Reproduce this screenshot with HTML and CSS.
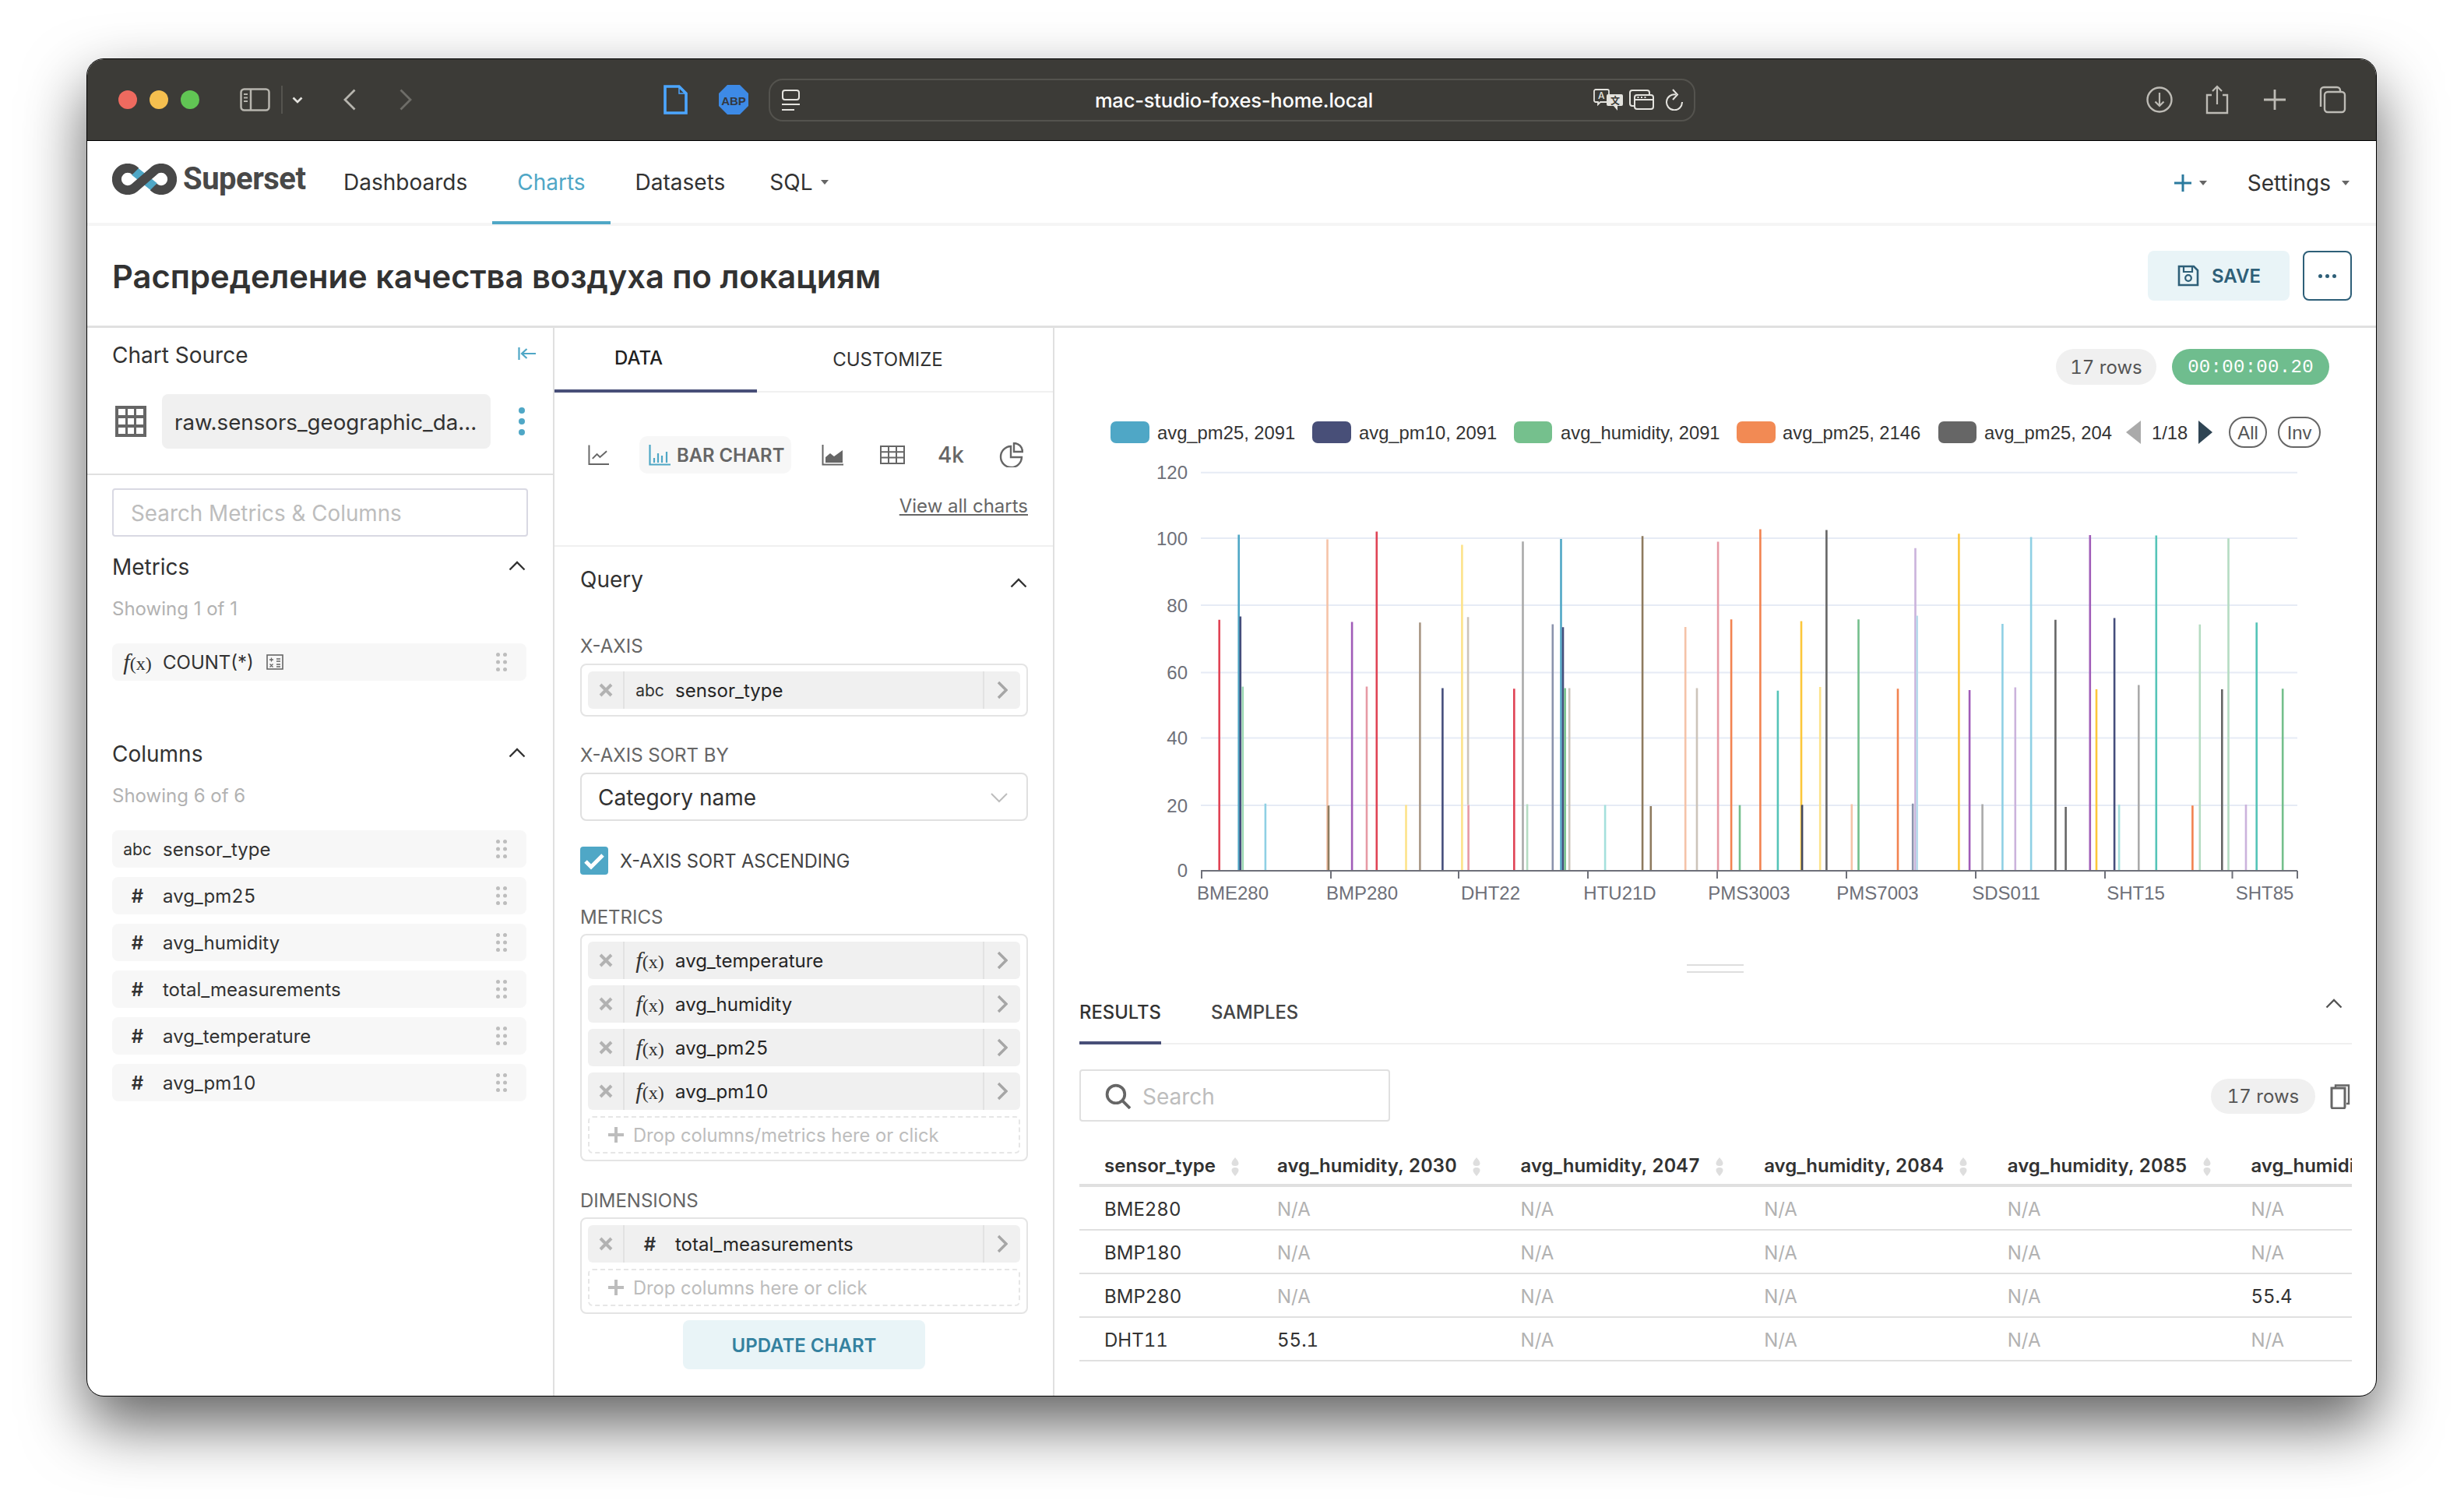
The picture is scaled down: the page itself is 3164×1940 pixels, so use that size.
FILE: index.html
```html
<!DOCTYPE html>
<html lang="en">
<head>
<meta charset="utf-8">
<title>Superset</title>
<link rel="stylesheet" href="styles.css">
</head>
<body>
<svg class="sprite" aria-hidden="true">
  <symbol id="drag" viewBox="0 0 14 24"><circle cx="2.5" cy="2.5" r="2.5"/><circle cx="11.5" cy="2.5" r="2.5"/><circle cx="2.5" cy="12" r="2.5"/><circle cx="11.5" cy="12" r="2.5"/><circle cx="2.5" cy="21.5" r="2.5"/><circle cx="11.5" cy="21.5" r="2.5"/></symbol>
  <symbol id="up" viewBox="0 0 22 13"><path d="M1.5 11.5 11 2l9.500 9.500" fill="none" stroke="currentColor" stroke-width="2.400"/></symbol>
  <symbol id="close" viewBox="0 0 18 18"><path d="M2 2l14 14M16 2 2 16" fill="none" stroke="currentColor" stroke-width="4"/></symbol>
  <symbol id="next" viewBox="0 0 14 24"><path d="M2 2l10 10L2 22" fill="none" stroke="currentColor" stroke-width="3.400"/></symbol>
  <symbol id="plus" viewBox="0 0 20 20"><path d="M10 0v20M0 10h20" fill="none" stroke="currentColor" stroke-width="4"/></symbol>
  <symbol id="plus-thin" viewBox="0 0 22 22"><path d="M11 0v22M0 11h22" fill="none" stroke="currentColor" stroke-width="3"/></symbol>
  <symbol id="sort" viewBox="0 0 10 24"><path d="M5 0C7 2.500 9.500 5 9.500 7.500a4.500 3.500 0 0 1-9 0C.5 5 3 2.500 5 0ZM5 24c2-2.500 4.500-5 4.500-7.500a4.500 3.500 0 0 0-9 0C.5 19 3 21.500 5 24Z"/></symbol>
</svg>

<div class="window">
  <header class="toolbar">
    <div class="lights"><span class="light light-red"></span><span class="light light-yellow"></span><span class="light light-green"></span></div>
    <svg class="tb-sidebar" viewBox="0 0 39 30"><rect x="1.500" y="1.500" width="36" height="27" rx="4" fill="none" stroke="currentColor" stroke-width="2.500"/><path d="M14 2v26" stroke="currentColor" stroke-width="2.500"/><path d="M5 8h5M5 12.500h5M5 17h5" stroke="currentColor" stroke-width="1.800"/></svg>
    <span class="tb-div"></span>
    <svg class="tb-chev" viewBox="0 0 14 9"><path d="M1.500 1.500 7 7l5.500-5.500" fill="none" stroke="currentColor" stroke-width="2.600"/></svg>
    <svg class="tb-back" viewBox="0 0 16 28"><path d="M14.500 1.500 2 14l12.500 12.500" fill="none" stroke="currentColor" stroke-width="2.800"/></svg>
    <svg class="tb-forward" viewBox="0 0 16 28"><path d="M1.500 1.500 14 14 1.500 26.500" fill="none" stroke="currentColor" stroke-width="2.800"/></svg>
    <svg class="tb-page" viewBox="0 0 31 38"><path d="M2 2h18l9 9v25H2Z" fill="none" stroke="#4ca6ff" stroke-width="3.600"/><path d="M20 2v9h9" fill="none" stroke="#4ca6ff" stroke-width="1.500"/></svg>
    <svg class="tb-abp" viewBox="0 0 38 38"><path class="abp-shape" d="M11 0h16l11 11v16L27 38H11L0 27V11Z"/><text class="abp-text" x="19" y="25.500" text-anchor="middle">ABP</text></svg>
    <div class="urlbar">
      <svg class="tb-reader" viewBox="0 0 23 27"><rect x="1" y="1" width="21" height="12" rx="3" fill="none" stroke="currentColor" stroke-width="2"/><path d="M0 19h23M0 26h16" stroke="currentColor" stroke-width="2"/></svg>
      <span class="url-text">mac-studio-foxes-home.local</span>
      <div class="url-actions">
        <svg class="tb-translate" viewBox="0 0 38 28"><path d="M3 1h15a2 2 0 0 1 2 2v12a2 2 0 0 1-2 2H9l-3 3v-3H3a2 2 0 0 1-2-2V3a2 2 0 0 1 2-2Z" fill="none" stroke="currentColor" stroke-width="1.800"/><text class="tr-a" x="6" y="13">A</text><path d="M19 7h17a2 2 0 0 1 2 2v11a2 2 0 0 1-2 2h-5v6l-5-6h-7a2 2 0 0 1-2-2V9a2 2 0 0 1 2-2Z" fill="currentColor"/><text class="tr-b" x="22" y="20">文</text></svg>
        <svg class="tb-windows" viewBox="0 0 32 26"><path d="M6 21H4a3 3 0 0 1-3-3V4a3 3 0 0 1 3-3h19a3 3 0 0 1 3 3v2" fill="none" stroke="currentColor" stroke-width="2"/><rect x="7" y="7" width="24" height="18" rx="3" fill="none" stroke="currentColor" stroke-width="2"/><path d="M7 13h24" stroke="currentColor" stroke-width="2"/><path d="M10.500 10h2M15 10h2M19.500 10h2" stroke="currentColor" stroke-width="2"/></svg>
        <svg class="tb-reload" viewBox="0 0 22 28"><path d="M13 7.500A10 10 0 1 0 21 17" fill="none" stroke="currentColor" stroke-width="2"/><path d="M9 1l6 6.500L9 14" fill="none" stroke="currentColor" stroke-width="2"/></svg>
      </div>
    </div>
    <div class="tb-right">
      <svg class="tb-tool" viewBox="0 0 36 38"><circle cx="18" cy="19" r="15.500" fill="none" stroke="currentColor" stroke-width="2.400"/><path d="M18 10v17M12.500 21.500 18 27l5.500-5.500" fill="none" stroke="currentColor" stroke-width="2.200"/></svg>
      <svg class="tb-tool" viewBox="0 0 36 38"><path d="M11 13H5v23h26V13h-6" fill="none" stroke="currentColor" stroke-width="2.400"/><path d="M18 25V2M12 8l6-6 6 6" fill="none" stroke="currentColor" stroke-width="2.200"/></svg>
      <svg class="tb-tool" viewBox="0 0 36 38"><path d="M18 6v26M4 19h28" fill="none" stroke="currentColor" stroke-width="2.800"/></svg>
      <svg class="tb-tool" viewBox="0 0 36 38"><path d="M3 28V7a4 4 0 0 1 4-4h17a4 4 0 0 1 4 4v2" fill="none" stroke="currentColor" stroke-width="2.400"/><rect x="8" y="9" width="26" height="26" rx="4" fill="none" stroke="currentColor" stroke-width="2.400"/></svg>
    </div>
  </header>

  <nav class="nav">
    <div class="brand">
      <svg class="brand-mark" viewBox="0 0 83 40"><path class="brand-blue" d="M29 10 54 30"/><path class="brand-dark" d="M30 10A14.140 14.140 0 1 0 30 30L53 10A14.140 14.140 0 1 1 53 30"/></svg>
      <span class="brand-name">Superset</span>
    </div>
    <a class="nav-item nav-first">Dashboards</a>
    <a class="nav-item nav-active">Charts</a>
    <a class="nav-item">Datasets</a>
    <a class="nav-item nav-sql">SQL<span class="caret"></span></a>
    <div class="nav-right">
      <span class="nav-plus"><svg class="nav-plus-icon"><use href="#plus-thin"/></svg><span class="caret"></span></span>
      <span class="nav-settings">Settings<span class="caret caret-settings"></span></span>
    </div>
  </nav>

  <section class="page-head">
    <h1 class="page-title">Распределение качества воздуха по локациям</h1>
    <div class="head-actions">
      <button class="btn-save">
        <svg class="save-icon" viewBox="0 0 28 28"><path d="M2 2h19l5 5v19H2Z" fill="none" stroke="currentColor" stroke-width="2.600"/><path d="M8 2v7h11V2" fill="none" stroke="currentColor" stroke-width="2.200"/><circle cx="14" cy="17" r="3.800" fill="none" stroke="currentColor" stroke-width="2.200"/></svg>
        SAVE
      </button>
      <button class="btn-more"><span class="dot"></span><span class="dot"></span><span class="dot"></span></button>
    </div>
  </section>

  <main class="main">
    <aside class="source">
      <div class="source-top">
        <div class="source-title-row">
          <span>Chart Source</span>
          <svg class="collapse-icon" viewBox="0 0 24 18"><path d="M1.500 1v16M23 9H5M11.500 3 5 9l6.500 6" fill="none" stroke="currentColor" stroke-width="2.200"/></svg>
        </div>
        <div class="dataset-row">
          <svg class="dataset-icon" viewBox="0 0 40 40"><path fill="#666" fill-rule="evenodd" d="M0 0h40v40H0ZM4 4v8h9V4Zm12 0v8h8V4Zm11 0v8h9V4ZM4 16v8h9v-8Zm12 0v8h8v-8Zm11 0v8h9v-8ZM4 28v8h9v-8Zm12 0v8h8v-8Zm11 0v8h9v-8Z"/></svg>
          <div class="dataset-name">raw.sensors_geographic_da...</div>
          <span class="kebab"><i></i><i></i><i></i></span>
        </div>
      </div>
      <div class="source-body">
        <div class="source-search">Search Metrics &amp; Columns</div>
        <div class="group-head metrics-head"><span>Metrics</span><svg class="chev-up"><use href="#up"/></svg></div>
        <div class="showing">Showing 1 of 1</div>
        <div class="list">
          <div class="list-row"><span class="type-cell"><span class="fx"><i>f</i>(x)</span></span><span class="row-name row-count">COUNT(*)</span>
            <svg class="calc-icon" viewBox="0 0 22 20"><rect x="1" y="1" width="20" height="18" fill="none" stroke="currentColor" stroke-width="1.600"/><path d="M4 7h5M6.500 4.500v5M13 6h5M13 9h5M4.500 12.500l4 4M8.500 12.500l-4 4M13 13h5M13 16h5" fill="none" stroke="currentColor" stroke-width="1.300"/></svg>
            <svg class="drag"><use href="#drag"/></svg></div>
        </div>
        <div class="group-head columns-head"><span>Columns</span><svg class="chev-up"><use href="#up"/></svg></div>
        <div class="showing">Showing 6 of 6</div>
        <div class="list">
          <div class="list-row"><span class="type-cell type-abc">abc</span><span class="row-name">sensor_type</span><svg class="drag"><use href="#drag"/></svg></div>
          <div class="list-row"><span class="type-cell type-hash">#</span><span class="row-name">avg_pm25</span><svg class="drag"><use href="#drag"/></svg></div>
          <div class="list-row"><span class="type-cell type-hash">#</span><span class="row-name">avg_humidity</span><svg class="drag"><use href="#drag"/></svg></div>
          <div class="list-row"><span class="type-cell type-hash">#</span><span class="row-name">total_measurements</span><svg class="drag"><use href="#drag"/></svg></div>
          <div class="list-row"><span class="type-cell type-hash">#</span><span class="row-name">avg_temperature</span><svg class="drag"><use href="#drag"/></svg></div>
          <div class="list-row"><span class="type-cell type-hash">#</span><span class="row-name">avg_pm10</span><svg class="drag"><use href="#drag"/></svg></div>
        </div>
      </div>
    </aside>

    <section class="controls">
      <div class="ctl-tabs">
        <div class="ctl-tab ctl-tab-data">DATA</div>
        <div class="ctl-tab ctl-tab-custom">CUSTOMIZE</div>
      </div>
      <div class="viz-row">
        <svg class="viz-line" viewBox="0 0 28 28"><path d="M1.500 1v25.500H28" fill="none" stroke="currentColor" stroke-width="2"/><path d="M6 19l6-6 4 4 9-8" fill="none" stroke="currentColor" stroke-width="2"/></svg>
        <div class="viz-active">
          <svg class="viz-bar" viewBox="0 0 28 28"><path d="M1.500 1v25.500H28M7 24v-6M12 24V12M17 24v-9M23 24V10" fill="none" stroke="currentColor" stroke-width="2.200"/></svg>
          BAR CHART
        </div>
        <svg class="viz-area" viewBox="0 0 36 28"><path d="M1.500 1v25.500H28" fill="none" stroke="currentColor" stroke-width="2"/><path d="M5 24v-7l6-5 5 4 11-8v16Z" fill="currentColor"/></svg>
        <svg class="viz-table" viewBox="0 0 32 24"><path d="M1 1h30v22H1ZM1 8.300h30M1 15.600h30M11 1v22M21 1v22" fill="none" stroke="currentColor" stroke-width="2"/></svg>
        <span class="viz-num">4k</span>
        <svg class="viz-pie" viewBox="0 0 37 32"><path d="M18 5A13.500 13.500 0 1 0 32 19H18Z" fill="none" stroke="currentColor" stroke-width="2.400" transform="translate(3 0)"/><path d="M25 1a11 11 0 0 1 11 11H25Z" fill="none" stroke="currentColor" stroke-width="2.400"/></svg>
      </div>
      <div class="view-all"><a>View all charts</a></div>
      <div class="query">
        <div class="query-head"><span>Query</span><svg class="chev-up"><use href="#up"/></svg></div>

        <div class="ctl-label label-xaxis">X-AXIS</div>
        <div class="ctl-box">
          <div class="pill"><span class="pill-x"><svg class="x-icon"><use href="#close"/></svg></span><span class="pill-type pill-abc">abc</span><span class="pill-name">sensor_type</span><span class="pill-go"><svg class="go-icon"><use href="#next"/></svg></span></div>
        </div>

        <div class="ctl-label label-sort">X-AXIS SORT BY</div>
        <div class="select"><span>Category name</span><svg class="select-chev" viewBox="0 0 22 13"><path d="M1 1l10 10L21 1" fill="none" stroke="currentColor" stroke-width="2"/></svg></div>

        <div class="check-row">
          <span class="check"><svg viewBox="0 0 36 36"><path d="M7 19l7 7L29 11" fill="none" stroke="#fff" stroke-width="5"/></svg></span>
          <span class="check-label">X-AXIS SORT ASCENDING</span>
        </div>

        <div class="ctl-label label-metrics">METRICS</div>
        <div class="ctl-box">
          <div class="pill"><span class="pill-x"><svg class="x-icon"><use href="#close"/></svg></span><span class="pill-type"><span class="fx"><i>f</i>(x)</span></span><span class="pill-name">avg_temperature</span><span class="pill-go"><svg class="go-icon"><use href="#next"/></svg></span></div>
          <div class="pill"><span class="pill-x"><svg class="x-icon"><use href="#close"/></svg></span><span class="pill-type"><span class="fx"><i>f</i>(x)</span></span><span class="pill-name">avg_humidity</span><span class="pill-go"><svg class="go-icon"><use href="#next"/></svg></span></div>
          <div class="pill"><span class="pill-x"><svg class="x-icon"><use href="#close"/></svg></span><span class="pill-type"><span class="fx"><i>f</i>(x)</span></span><span class="pill-name">avg_pm25</span><span class="pill-go"><svg class="go-icon"><use href="#next"/></svg></span></div>
          <div class="pill"><span class="pill-x"><svg class="x-icon"><use href="#close"/></svg></span><span class="pill-type"><span class="fx"><i>f</i>(x)</span></span><span class="pill-name">avg_pm10</span><span class="pill-go"><svg class="go-icon"><use href="#next"/></svg></span></div>
          <div class="drop"><svg class="drop-plus"><use href="#plus"/></svg>Drop columns/metrics here or click</div>
        </div>

        <div class="ctl-label label-dim">DIMENSIONS</div>
        <div class="ctl-box">
          <div class="pill"><span class="pill-x"><svg class="x-icon"><use href="#close"/></svg></span><span class="pill-type pill-hash">#</span><span class="pill-name">total_measurements</span><span class="pill-go"><svg class="go-icon"><use href="#next"/></svg></span></div>
          <div class="drop"><svg class="drop-plus"><use href="#plus"/></svg>Drop columns here or click</div>
        </div>

        <button class="btn-update">UPDATE CHART</button>
      </div>
    </section>

    <section class="viewer">
      <div class="viewer-badges">
        <span class="badge-rows">17 rows</span>
        <span class="badge-time">00:00:00.20</span>
      </div>
      <svg class="chart" viewBox="1354 510 1697 680">
        <defs><clipPath id="legend-clip"><rect x="2540" y="520" width="172" height="70"/></clipPath></defs>
        <g class="grid">
          <path d="M1542 606.700H2950M1542 691H2950M1542 777H2950M1542 863.400H2950M1542 947.600H2950M1542 1034H2950"/>
        </g>
        <g class="y-labels">
          <text x="1525" y="615">120</text><text x="1525" y="700">100</text><text x="1525" y="786">80</text><text x="1525" y="872">60</text><text x="1525" y="956">40</text><text x="1525" y="1043">20</text><text x="1525" y="1126">0</text>
        </g>
        <g class="bars">
          <path stroke="#e04355" d="M1565.700 795.800V1118M1767.800 682.600V1118M1944.300 884.200V1118"/>
          <path stroke="#4fa7c6" d="M1590.700 686.500V1118M2004.500 692.100V1118"/>
          <path stroke="#454e7c" d="M1592.800 791.400V1118M1852.400 883.400V1118M2007 805.300V1118M2715.100 793.600V1118"/>
          <path stroke="#74bf8c" d="M2009.600 883.400V1118M2234 1033.800V1118M2386.500 795.300V1118M2931.200 884.200V1118"/>
          <path stroke="#9ad6b0" d="M1595.800 881.600V1118"/>
          <path stroke="#8fd0e4" d="M1624.900 1031.700V1118M2571.400 801V1118M2608.100 689.500V1118"/>
          <path stroke="#f5c3a8" d="M1704.500 692.600V1118M2164.200 804.900V1118M2377.800 1032.500V1118"/>
          <path stroke="#8e7b5f" d="M1706 1034.300V1118M2109.100 688.200V1118M2119.800 1035.100V1118"/>
          <path stroke="#a89683" d="M1823.400 799.300V1118"/>
          <path stroke="#a05cb8" d="M1736.100 798.400V1118M2529.100 886V1118M2683.800 686.900V1118"/>
          <path stroke="#e69aa5" d="M1755 881.600V1118M1885.600 1033.400V1118M2206.100 695.600V1118"/>
          <path stroke="#fde38a" d="M1805.500 1033.400V1118M1877.400 699.500V1118M2337.200 882.100V1118"/>
          <path stroke="#ccc4ba" d="M1885.100 792.300V1033M2015.200 883.400V1118M2179 883.400V1118"/>
          <path stroke="#aaaaaa" d="M1955.500 695.200V1118M2545.600 1032.500V1118M2746.300 879.400V1118"/>
          <path stroke="#b5dcc2" d="M1961.100 1032.500V1118M2824.800 801.800V1118M2861.500 691.300V1118"/>
          <path stroke="#8b93ad" d="M1993.800 801.400V1118M2456.200 1031.700V1118"/>
          <path stroke="#a5e0dd" d="M2061.100 1033.400V1118M2721.100 1033V1118"/>
          <path stroke="#f28350" d="M2223.100 795.300V1118M2260.400 679.600V1118M2437 884.200V1118M2815.400 1034.300V1118"/>
          <path stroke="#55c4b8" d="M2282.900 886.800V1118M2768.800 687.400V1118M2897.700 799.200V1118"/>
          <path stroke="#fcc73a" d="M2313 797.500V1118M2515.400 685.200V1118M2692 885.100V1118"/>
          <path stroke="#444a60" d="M2314.100 1033.400V1118"/>
          <path stroke="#cbb3dc" d="M2459.500 703.800V1118M2587.800 882.500V1118M2884 1033V1118"/>
          <path stroke="#b8dcec" d="M2461.700 790.600V1118"/>
          <path stroke="#666666" d="M2345.400 680.400V1118M2639.400 795.800V1118M2652.600 1036V1118M2853.300 885.100V1118"/>
        </g>
        <path class="axis" d="M1542 1118H2950M1543 1118v10M1709 1118v10M1873 1118v10M2039 1118v10M2205 1118v10M2371 1118v10M2537 1118v10M2703 1118v10M2866.500 1118v10M2950 1118v10"/>
        <g class="x-labels">
          <text x="1583" y="1155">BME280</text><text x="1749" y="1155">BMP280</text><text x="1914" y="1155">DHT22</text><text x="2080" y="1155">HTU21D</text><text x="2246" y="1155">PMS3003</text><text x="2411" y="1155">PMS7003</text><text x="2576" y="1155">SDS011</text><text x="2742.500" y="1155">SHT15</text><text x="2908" y="1155">SHT85</text>
        </g>
        <g class="legend">
          <rect x="1426" y="541" width="50" height="28" rx="7" fill="#4fa7c6"/><text x="1486" y="563.500">avg_pm25, 2091</text>
          <rect x="1685" y="541" width="50" height="28" rx="7" fill="#484f78"/><text x="1745" y="563.500">avg_pm10, 2091</text>
          <rect x="1944" y="541" width="49" height="28" rx="7" fill="#75c08d"/><text x="2004" y="563.500">avg_humidity, 2091</text>
          <rect x="2230" y="541" width="50" height="28" rx="7" fill="#f28a54"/><text x="2289" y="563.500">avg_pm25, 2146</text>
          <rect x="2489" y="541" width="49" height="28" rx="7" fill="#666666"/><text x="2548" y="563.500" clip-path="url(#legend-clip)">avg_pm25, 2047</text>
          <path d="M2749 540v30l-19-15Z" fill="#aaaaaa"/>
          <text x="2763" y="563.500">1/18</text>
          <path d="M2823 540v30l18-15Z" fill="#2f4554"/>
          <rect class="legend-btn" x="2863" y="536" width="47" height="38" rx="19"/><text class="legend-btn-text" x="2886.500" y="563.500">All</text>
          <rect class="legend-btn" x="2926" y="536" width="53" height="38" rx="19"/><text class="legend-btn-text" x="2952.500" y="563.500">Inv</text>
        </g>
      </svg>
      <div class="handle"></div>
      <div class="results">
        <div class="res-tabs">
          <span class="res-tab res-tab-on">RESULTS</span>
          <span class="res-tab">SAMPLES</span>
          <svg class="res-collapse"><use href="#up"/></svg>
        </div>
        <div class="res-tools">
          <div class="res-search">
            <svg class="res-search-icon" viewBox="0 0 32 32"><circle cx="13.500" cy="13.500" r="11" fill="none" stroke="currentColor" stroke-width="3.600"/><path d="M21.500 21.500 31 31" stroke="currentColor" stroke-width="3.600"/></svg>
            <span>Search</span>
          </div>
          <div class="res-right">
            <span class="badge-rows res-count">17 rows</span>
            <svg class="copy-icon" viewBox="0 0 26 32"><path d="M7 4V1.500h17V25h-3" fill="none" stroke="currentColor" stroke-width="2.400"/><path d="M2 5h17v24a2 2 0 0 1-2 2H4a2 2 0 0 1-2-2Z" fill="none" stroke="currentColor" stroke-width="3"/></svg>
          </div>
        </div>
        <div class="table-wrap">
          <table class="res-table">
            <thead>
              <tr>
                <th class="col-first">sensor_type<svg class="sort"><use href="#sort"/></svg></th>
                <th>avg_humidity, 2030<svg class="sort"><use href="#sort"/></svg></th>
                <th>avg_humidity, 2047<svg class="sort"><use href="#sort"/></svg></th>
                <th>avg_humidity, 2084<svg class="sort"><use href="#sort"/></svg></th>
                <th>avg_humidity, 2085<svg class="sort"><use href="#sort"/></svg></th>
                <th>avg_humidity, 2091<svg class="sort"><use href="#sort"/></svg></th>
              </tr>
            </thead>
            <tbody>
              <tr><td>BME280</td><td class="na">N/A</td><td class="na">N/A</td><td class="na">N/A</td><td class="na">N/A</td><td class="na">N/A</td></tr>
              <tr><td>BMP180</td><td class="na">N/A</td><td class="na">N/A</td><td class="na">N/A</td><td class="na">N/A</td><td class="na">N/A</td></tr>
              <tr><td>BMP280</td><td class="na">N/A</td><td class="na">N/A</td><td class="na">N/A</td><td class="na">N/A</td><td>55.4</td></tr>
              <tr><td>DHT11</td><td>55.1</td><td class="na">N/A</td><td class="na">N/A</td><td class="na">N/A</td><td class="na">N/A</td></tr>
            </tbody>
          </table>
        </div>
      </div>
    </section>
  </main>
</div>
</body>
</html>
```

FILE: styles.css
```css
* { box-sizing: border-box; }
html, body { margin: 0; padding: 0; }
body {
  width: 3164px;
  height: 1940px;
  overflow: hidden;
  background: #fff;
  padding: 75px 0 0 111px;
  font-family: Inter, "Noto Sans", sans-serif;
  font-size: 28px;
  color: #323232;
}
svg { display: block; flex: none; }
.sprite { width: 0; height: 0; position: absolute; }

.window {
  width: 2941px;
  height: 1718px;
  border: 1px solid #000;
  border-radius: 22px;
  background: #fff;
  overflow: hidden;
  display: flex;
  flex-direction: column;
  box-shadow: 0 36px 80px rgba(0, 0, 0, .62);
}

/* browser toolbar */
.toolbar {
  height: 105px;
  flex: none;
  display: flex;
  align-items: center;
  padding-left: 40px;
  background: #3c3b37;
  border-bottom: 1px solid #000;
}
.lights { display: flex; gap: 16px; }
.light { width: 24px; height: 24px; border-radius: 50%; }
.light-red { background: #ee6a5f; }
.light-yellow { background: #f5bf4f; }
.light-green { background: #61c554; }
.tb-sidebar { width: 39px; height: 30px; margin-left: 52px; color: #b7b5ae; }
.tb-div { width: 2px; height: 36px; margin-left: 14px; background: #55544f; }
.tb-chev { width: 14px; height: 9px; margin-left: 12px; color: #e4e3de; }
.tb-back { width: 16px; height: 28px; margin-left: 52px; color: #b7b5ae; }
.tb-forward { width: 16px; height: 28px; margin-left: 56px; color: #6e6d68; }
.tb-page { width: 31px; height: 38px; margin-left: 323px; }
.tb-abp { width: 38px; height: 38px; margin-left: 40px; }
.abp-shape { fill: #3d8ae6; }
.abp-text { font: 700 15px "Liberation Sans", sans-serif; fill: #33383f; }
.urlbar {
  width: 1190px;
  height: 55px;
  margin-left: 26px;
  padding: 0 14px 0 15px;
  display: grid;
  grid-template-columns: 1fr auto 1fr;
  align-items: center;
  border: 2px solid #54534e;
  border-radius: 18px;
  color: #e4e3de;
}
.tb-reader { width: 23px; height: 27px; }
.url-text { font-size: 25.500px; font-weight: 500; color: #fff; letter-spacing: -.2px; margin-left: 4px; }
.url-actions { display: flex; align-items: center; justify-content: flex-end; gap: 8px; }
.tb-translate { width: 38px; height: 28px; }
.tr-a { font: 500 12px Inter, sans-serif; fill: currentColor; }
.tr-b { font: 700 12px "Noto Sans CJK SC", sans-serif; fill: #3c3b37; }
.tb-windows { width: 32px; height: 26px; }
.tb-reload { width: 22px; height: 28px; margin-left: 7px; }
.tb-right { margin-left: auto; padding-right: 38px; display: flex; gap: 38px; color: #bdbbb5; }
.tb-tool { width: 36px; height: 38px; }

/* app nav */
.nav {
  height: 109px;
  flex: none;
  display: flex;
  align-items: flex-start;
  padding-left: 32px;
  border-bottom: 4px solid #f5f5f5;
}
.brand { height: 105px; width: 265px; display: flex; align-items: center; padding-bottom: 8px; }
.brand-mark { width: 83px; height: 40px; }
.brand-blue { fill: none; stroke: #4fa7c6; stroke-width: 12px; }
.brand-dark { fill: none; stroke: #484848; stroke-width: 12px; }
.brand-name {
  margin-left: 8px;
  font: 700 40px Roboto, sans-serif;
  letter-spacing: -.5px;
  color: #484848;
}
.nav-item {
  height: 107px;
  padding: 3px 32px 0;
  display: flex;
  align-items: center;
  border-bottom: 4px solid transparent;
  position: relative;
}
.nav-active { color: #4fa7c6; border-bottom-color: #4fa7c6; }
.nav-sql { padding-left: 25px; }
.caret {
  display: inline-block;
  width: 0;
  height: 0;
  margin-left: 10px;
  border-left: 5px solid transparent;
  border-right: 5px solid transparent;
  border-top: 6px solid #666;
}
.caret-settings { margin-left: 14px; }
.nav-right { margin-left: auto; height: 105px; display: flex; align-items: center; padding-right: 34px; padding-top: 3px; }
.nav-plus { display: flex; align-items: center; color: #2b7a9e; }
.nav-plus-icon { width: 22px; height: 22px; }
.nav-settings { margin-left: 52px; display: flex; align-items: center; }

/* page header */
.page-head {
  height: 131px;
  flex: none;
  display: flex;
  align-items: center;
  justify-content: space-between;
  padding: 0 31px 0 32px;
  border-bottom: 3px solid #e0e0e0;
}
.page-title { margin: 2px 0 0; font-size: 41.700px; font-weight: 600; color: #323232; }
.head-actions { display: flex; gap: 17px; }
.btn-save {
  width: 182px;
  height: 64px;
  padding: 0 0 0 38px;
  display: flex;
  align-items: center;
  gap: 16px;
  border: 0;
  border-radius: 8px;
  background: #e9f4f7;
  color: #2e5f78;
  font: 600 24px Inter, sans-serif;
}
.save-icon { width: 28px; height: 28px; }
.btn-more {
  width: 63px;
  height: 64px;
  padding: 0;
  display: flex;
  align-items: center;
  justify-content: center;
  gap: 4px;
  border: 2px solid #2e5f78;
  border-radius: 8px;
  background: #fff;
}
.dot { width: 5px; height: 5px; border-radius: 50%; background: #2e5f78; }

/* three panes */
.main { flex: 1; min-height: 0; display: flex; }

/* source */
.source { width: 600px; flex: none; border-right: 2px solid #e0e0e0; }
.source-top { height: 189px; border-bottom: 2px solid #e0e0e0; padding: 0 21px 0 32px; }
.source-title-row { height: 70px; display: flex; align-items: center; justify-content: space-between; }
.collapse-icon { width: 24px; height: 18px; color: #4fa7c6; margin-bottom: 4px; }
.dataset-row { margin-top: 15px; height: 70px; display: flex; align-items: center; }
.dataset-icon { width: 40px; height: 40px; margin-left: 4px; }
.dataset-name {
  width: 422px;
  height: 70px;
  margin-left: 20px;
  padding: 2px 0 0 16px;
  display: flex;
  align-items: center;
  border-radius: 8px;
  background: #f0f0f0;
  font-size: 27.700px;
}
.kebab { margin-left: 36px; display: flex; flex-direction: column; gap: 6px; }
.kebab i { width: 8px; height: 8px; border-radius: 50%; background: #4fa7c6; }
.source-body { padding: 17px 32px 0 32px; }
.source-search {
  height: 62px;
  padding: 2px 0 0 22px;
  display: flex;
  align-items: center;
  border: 2px solid #d9d9e3;
  border-radius: 4px;
  color: #bdbdbd;
  font-size: 27.800px;
}
.group-head { height: 40px; display: flex; align-items: center; justify-content: space-between; padding: 0 3px 0 0; }
.metrics-head { margin-top: 19px; }
.columns-head { margin-top: 74px; }
.group-head .chev-up { margin-bottom: 3px; }
.chev-up { width: 22px; height: 13px; color: #323232; }
.showing { height: 40px; margin-top: 13px; display: flex; align-items: center; font-size: 24px; color: #b2b2b2; }
.list { margin: 25px 2px 0 0; display: flex; flex-direction: column; gap: 12px; }
.list-row {
  height: 48px;
  display: flex;
  align-items: center;
  border-radius: 8px;
  background: #f7f7f7;
  font-size: 24px;
}
.type-cell { width: 65px; flex: none; text-align: center; }
.type-abc { font-size: 21px; }
.type-hash { font-weight: 600; }
.row-name { margin-right: 16px; font-variant-numeric: tabular-nums; }
.row-count { font-variant-numeric: normal; }
.fx { font-family: "Liberation Serif", serif; font-size: 24px; white-space: nowrap; }
.fx i { font-size: 30px; line-height: 1; }
.calc-icon { width: 22px; height: 20px; color: #666; }
.drag { width: 14px; height: 24px; margin-left: auto; margin-right: 25px; fill: #bdbdbd; }

/* controls */
.controls { width: 642px; flex: none; border-right: 2px solid #e0e0e0; }
.ctl-tabs { height: 83px; display: flex; border-bottom: 2px solid #f0f0f0; }
.ctl-tab { height: 83px; display: flex; align-items: center; justify-content: center; padding-bottom: 2px; font-size: 24px; font-weight: 500; }
.ctl-tab-data { width: 260px; padding-right: 44px; border-bottom: 4px solid #484f78; color: #1f1f1f; }
.ctl-tab-custom { width: 336px; font-weight: 400; }
.viz-row { margin: 56px 0 0 43px; height: 48px; display: flex; align-items: center; gap: 39px; color: #666; }
.viz-line { width: 27px; height: 28px; }
.viz-active {
  width: 195px;
  height: 48px;
  padding-left: 12px;
  display: flex;
  align-items: center;
  gap: 8px;
  border-radius: 10px;
  background: #f7f7f7;
  font-size: 23.800px;
  font-weight: 600;
  white-space: nowrap;
}
.viz-bar { width: 28px; height: 28px; color: #4fa7c6; }
.viz-area { width: 36px; height: 28px; }
.viz-table { width: 32px; height: 24px; }
.viz-num { width: 37px; text-align: right; font-weight: 500; font-size: 28px; }
.viz-pie { width: 37px; height: 32px; }
.view-all { height: 40px; margin-top: 21px; padding-right: 32px; display: flex; align-items: center; justify-content: flex-end; font-size: 24px; color: #666; }
.view-all a { text-decoration: underline; }
.query { margin-top: 31px; padding: 22px 32px 0 33px; border-top: 2px solid #f0f0f0; }
.query-head { height: 40px; display: flex; align-items: center; justify-content: space-between; padding-right: 1px; }
.query-head .chev-up { margin-top: 8px; }
.ctl-label { height: 30px; margin-bottom: 8px; display: flex; align-items: center; font-size: 24px; color: #666; }
.label-xaxis { margin-top: 50px; }
.label-sort { margin-top: 34px; }
.label-metrics { margin-top: 39px; margin-bottom: 7px; }
.label-dim { margin-top: 35px; margin-bottom: 7px; }
.ctl-box {
  padding: 8px;
  display: flex;
  flex-direction: column;
  gap: 8px;
  border: 2px solid #e4e4e4;
  border-radius: 8px;
}
.pill { height: 48px; display: flex; align-items: center; border-radius: 6px; background: #f0f0f0; font-size: 24px; }
.pill-x { width: 47px; height: 48px; display: flex; align-items: center; justify-content: center; border-right: 2px solid #e2e2e2; color: #b2b2b2; }
.x-icon { width: 18px; height: 18px; }
.pill-type { width: 65px; text-align: center; }
.pill-abc { font-size: 21px; }
.pill-hash { font-weight: 600; }
.pill-name { flex: 1; color: #252525; font-variant-numeric: tabular-nums; }
.pill-go { width: 48px; height: 48px; display: flex; align-items: center; justify-content: center; border-left: 2px solid #e2e2e2; color: #a6a6a6; }
.go-icon { width: 14px; height: 24px; }
.select {
  height: 62px;
  padding: 2px 24px 0 21px;
  display: flex;
  align-items: center;
  justify-content: space-between;
  border: 2px solid #e0e0e0;
  border-radius: 8px;
}
.select-chev { width: 22px; height: 13px; color: #bdbdbd; }
.check-row { margin-top: 33px; height: 36px; display: flex; align-items: center; gap: 15px; }
.check { width: 36px; height: 36px; border-radius: 4px; background: #4fa7c6; }
.check-label { font-size: 23.600px; color: #444; }
.drop {
  height: 48px;
  padding-left: 24px;
  display: flex;
  align-items: center;
  gap: 12px;
  border: 2px dashed #e6e6e6;
  border-radius: 6px;
  font-size: 23.700px;
  color: #bdbdbd;
}
.drop-plus { width: 20px; height: 20px; color: #bdbdbd; }
.btn-update {
  display: block;
  width: 311px;
  height: 63px;
  margin: 8px auto 0;
  padding: 1px 0 0;
  border: 0;
  border-radius: 8px;
  background: #e9f4f7;
  color: #34819f;
  font: 600 24px Inter, sans-serif;
}

/* viewer */
.viewer { flex: 1; min-width: 0; padding-top: 27px; display: flex; flex-direction: column; }
.viewer-badges { height: 46px; padding-right: 60px; display: flex; justify-content: flex-end; gap: 20px; }
.badge-rows {
  width: 129px;
  height: 46px;
  display: flex;
  align-items: center;
  justify-content: center;
  border-radius: 23px;
  background: #f0f0f0;
  font-size: 24px;
  font-variant-numeric: tabular-nums;
  color: #555;
}
.badge-time {
  width: 202px;
  height: 46px;
  display: flex;
  align-items: center;
  justify-content: center;
  border-radius: 23px;
  background: #6fbd8e;
  color: #fff;
  font: 24px "Liberation Mono", monospace;
  letter-spacing: .3px;
}
.chart { width: 1697px; height: 680px; margin-top: 16px; }
.grid path { stroke: #e6ebf5; stroke-width: 2; fill: none; }
.y-labels text { text-anchor: end; font: 24px "Liberation Sans", sans-serif; fill: #6e7079; }
.x-labels text { text-anchor: middle; font: 24px "Liberation Sans", sans-serif; fill: #6e7079; }
.bars path { fill: none; stroke-width: 2.600; }
.axis { fill: none; stroke: #6e7079; stroke-width: 2; }
.legend text { font: 23.800px "Liberation Sans", sans-serif; fill: #333; }
.legend-btn { fill: #fff; stroke: #666; stroke-width: 2; }
.legend .legend-btn-text { text-anchor: middle; fill: #555; }
.handle {
  width: 73px;
  height: 11px;
  margin: 48px auto 0;
  border-top: 2px solid #dedede;
  border-bottom: 2px solid #dedede;
}
.results { padding: 0 31px 0 32px; }
.res-tabs { height: 92px; display: flex; align-items: flex-start; border-bottom: 2px solid #f0f0f0; }
.res-tab {
  height: 92px;
  margin-right: 62px;
  padding-top: 36px;
  line-height: 30px;
  font-size: 23.800px;
  font-weight: 500;
  color: #444;
  border-bottom: 4px solid transparent;
}
.res-tab-on { margin-right: 64px; border-bottom-color: #484f78; color: #323232; }
.res-collapse { width: 22px; height: 13px; margin: 33px 12px 0 auto; color: #555; }
.res-tools { height: 67px; margin-top: 32px; display: flex; align-items: center; justify-content: space-between; }
.res-search {
  width: 399px;
  height: 67px;
  padding: 2px 0 0 31px;
  display: flex;
  align-items: center;
  gap: 15px;
  border: 2px solid #e0e0e0;
  border-radius: 4px;
  color: #bdbdbd;
}
.res-search-icon { width: 33px; height: 33px; color: #666; }
.res-right { display: flex; align-items: center; gap: 19px; padding-top: 2px; }
.res-count { width: 134px; height: 45px; }
.copy-icon { width: 26px; height: 32px; margin-right: 2px; color: #666; }
.table-wrap { margin-top: 28px; overflow: hidden; }
.res-table { width: 1785px; table-layout: fixed; border-collapse: separate; border-spacing: 0; font-size: 24px; font-variant-numeric: tabular-nums; }
.res-table th, .res-table td { padding: 2px 0 0 32px; text-align: left; white-space: nowrap; }
.res-table th {
  height: 56px;
  padding-top: 4px;
  font-weight: 600;
  color: #323232;
  border-bottom: 4px solid #e0e0e0;
}
.res-table th.col-first { width: 222px; }
.res-table td { height: 56px; border-bottom: 2px solid #e0e0e0; color: #323232; }
.res-table td.na { color: #b2b2b2; }
.sort { display: inline-block; vertical-align: middle; width: 10px; height: 24px; margin-left: 20px; fill: #dedede; }
```
